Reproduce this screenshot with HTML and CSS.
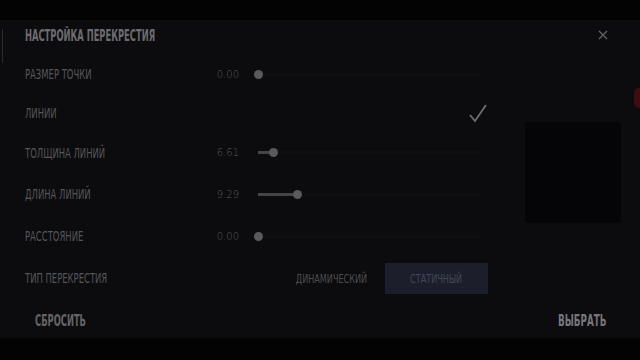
FILE: index.html
```html
<!DOCTYPE html>
<html lang="ru">
<head>
  <meta charset="UTF-8">
  <title>Настройка перекрестия</title>
  <link rel="stylesheet" href="styles.css">
</head>
<body>

  <div class="screen">
    <div class="top-band"></div>

    <div class="panel">
      <div class="edge-mark"></div>
      <div class="red-blob"></div>

      <div class="title-row">
        <h2 class="title">Настройка перекрестия</h2>
        <svg class="close" width="10" height="10" viewBox="0 0 10 10">
          <path d="M1 1 L9 9 M9 1 L1 9" stroke="#66666a" stroke-width="1.2" fill="none"/>
        </svg>
      </div>

      <div class="content">
        <div class="settings">
          <div class="label">Размер точки</div>
          <div class="value">0.00</div>
          <div class="control">
            <div class="track"><div class="fill" style="width: 0px"></div><div class="knob"></div></div>
          </div>

          <div class="label">Линии</div>
          <div class="value"></div>
          <div class="control control-end">
            <svg class="check" width="20" height="20" viewBox="0 0 20 20">
              <path d="M2 12 L7 18 L18 2" stroke="#6e6e72" stroke-width="1.8" fill="none"/>
            </svg>
          </div>

          <div class="label">Толщина линий</div>
          <div class="value">6.61</div>
          <div class="control">
            <div class="track"><div class="fill" style="width: 15px"></div><div class="knob"></div></div>
          </div>

          <div class="label">Длина линий</div>
          <div class="value">9.29</div>
          <div class="control">
            <div class="track"><div class="fill" style="width: 39px"></div><div class="knob"></div></div>
          </div>

          <div class="label">Расстояние</div>
          <div class="value">0.00</div>
          <div class="control">
            <div class="track"><div class="fill" style="width: 0px"></div><div class="knob"></div></div>
          </div>

          <div class="label">Тип перекрестия</div>
          <div class="value"></div>
          <div class="control control-end">
            <div class="segmented">
              <button class="seg"><span>Динамический</span></button>
              <button class="seg seg-active"><span>Статичный</span></button>
            </div>
          </div>
        </div>

        <div class="preview"></div>
      </div>

      <div class="footer">
        <button class="footer-btn">Сбросить</button>
        <button class="footer-btn footer-btn-main">Выбрать</button>
      </div>
    </div>
  </div>

</body>
</html>
```

FILE: styles.css
```css
body {
  margin: 0;
  background: #030303;
  font-family: "DejaVu Sans Condensed", "Liberation Sans", sans-serif;
}
.screen {
  width: 640px;
  height: 360px;
  overflow: hidden;
}
.top-band {
  height: 20px;
  background: #030303;
}
.panel {
  position: relative;
  height: 318px;
  background: #0c0c0e;
  display: flex;
  flex-direction: column;
}
.edge-mark {
  position: absolute;
  left: 2px;
  top: 9px;
  width: 1px;
  height: 34px;
  background: #2a2a2c;
}
.red-blob {
  position: absolute;
  right: -4px;
  top: 68px;
  width: 10px;
  height: 20px;
  border-radius: 5px;
  background: #3e0d10;
}
.title-row {
  height: 30px;
  padding: 0 32px 0 25px;
  display: flex;
  align-items: center;
  justify-content: space-between;
}
.title {
  margin: 0;
  font-size: 16px;
  font-weight: bold;
  text-transform: uppercase;
  white-space: nowrap;
  color: #6c6c70;
  transform: scaleX(0.58);
  transform-origin: left center;
}
.content {
  display: flex;
}
.settings {
  padding-left: 25px;
  display: grid;
  grid-template-columns: 155px 44px 234px;
  grid-template-rows: 38px 39px 41px 42px 42px 42px;
  column-gap: 15px;
  align-items: center;
  margin-top: 5px;
}
.label {
  justify-self: start;
  font-size: 14px;
  text-transform: uppercase;
  white-space: nowrap;
  color: #55555a;
  transform: scaleX(0.67);
  transform-origin: left center;
}
.value {
  text-align: right;
  font-family: "DejaVu Sans", sans-serif;
  font-weight: 200;
  font-size: 10px;
  color: #58585c;
}
.control {
  display: flex;
  align-items: center;
}
.control-end {
  justify-content: flex-end;
}
.track {
  width: 222px;
  height: 3px;
  margin-left: 4px;
  background: #0f0f11;
  display: flex;
  align-items: center;
}
.fill {
  height: 3px;
  background: #454548;
}
.knob {
  width: 9px;
  height: 9px;
  border-radius: 50%;
  background: #5a5a5c;
  margin-left: -4px;
}
.segmented {
  display: flex;
  gap: 2px;
}
.seg {
  width: 103px;
  height: 31px;
  padding: 0;
  border: none;
  background: transparent;
  font-family: inherit;
  font-size: 12.5px;
  text-transform: uppercase;
  color: #4c4c50;
}
.seg span {
  display: inline-block;
  white-space: nowrap;
  transform: scaleX(0.72);
}
.seg-active {
  background: #1c1f2b;
  color: #434858;
}
.preview {
  width: 96px;
  height: 101px;
  margin: 72px 0 0 37px;
  border-radius: 3px;
  background: #050507;
}
.footer {
  flex: 1;
  display: flex;
  justify-content: space-between;
  align-items: flex-end;
  padding: 0 34px 8px 35px;
}
.footer-btn {
  padding: 0;
  border: none;
  background: transparent;
  font-family: inherit;
  font-size: 15px;
  font-weight: bold;
  text-transform: uppercase;
  white-space: nowrap;
  color: #646468;
  transform: scaleX(0.62);
  transform-origin: left center;
}
.footer-btn-main {
  color: #76767c;
  transform: scaleX(0.65);
  transform-origin: right center;
}
```
